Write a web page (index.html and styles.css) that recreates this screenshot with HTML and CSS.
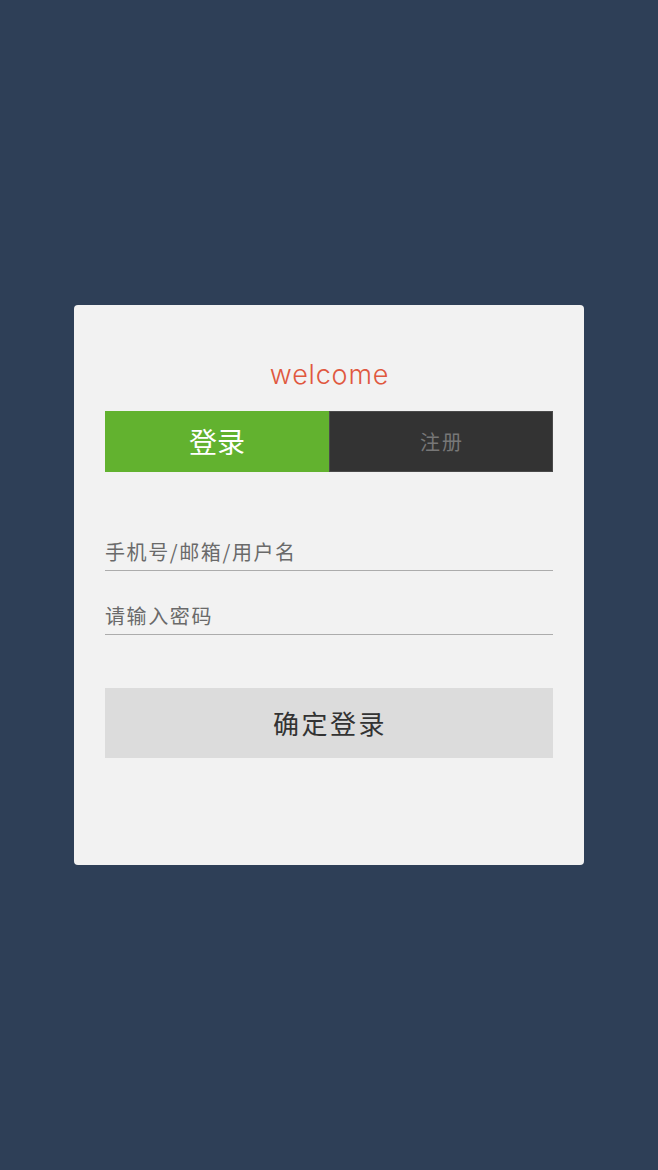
FILE: index.html
```html
<!DOCTYPE html>
<html lang="zh">
<head>
<meta charset="utf-8">
<title>登录</title>
<link rel="stylesheet" href="styles.css">
</head>
<body>
<main class="page">
  <section class="card">
    <h1 class="welcome">welcome</h1>
    <div class="tabs">
      <div class="tab tab-active">登录</div>
      <div class="tab tab-inactive">注册</div>
    </div>
    <div class="field field-user"><span class="placeholder">手机号/邮箱/用户名</span></div>
    <div class="field field-pass"><span class="placeholder">请输入密码</span></div>
    <button class="submit">确定登录</button>
  </section>
</main>
</body>
</html>
```
FILE: styles.css
```css
html, body {
  margin: 0;
  padding: 0;
}
body {
  background: #2e3f57;
  font-family: "Noto Sans CJK SC", "Liberation Sans", sans-serif;
  width: 658px;
  height: 1170px;
}
.page {
  display: flex;
  justify-content: center;
  padding-top: 305px;
}
.card {
  box-sizing: border-box;
  width: 510px;
  height: 560px;
  background: #f2f2f2;
  border-radius: 4px;
  padding: 0 31px;
  display: flex;
  flex-direction: column;
}
.welcome {
  margin: 54px 0 0;
  height: 52px;
  text-align: center;
  font-family: "Inter", "Liberation Sans", sans-serif;
  font-weight: 300;
  font-size: 27px;
  line-height: 32px;
  color: #e0583f;
  letter-spacing: 0.8px;
  padding-left: 1px;
}
.tabs {
  display: flex;
  height: 61px;
}
.tab {
  display: flex;
  align-items: center;
  justify-content: center;
  box-sizing: border-box;
}
.tab-active {
  width: 224px;
  background: #62b22f;
  color: #ffffff;
  font-size: 28px;
  padding-bottom: 2px;
}
.tab-inactive {
  width: 224px;
  background: #333333;
  border: 1px solid #4a4a4a;
  color: #777777;
  font-size: 20px;
  letter-spacing: 2px;
  padding-left: 2px;
}
.field {
  height: 38px;
  border-bottom: 1px solid #acacac;
  display: flex;
  align-items: flex-end;
  padding-bottom: 5px;
  box-sizing: border-box;
}
.field-user {
  margin-top: 61px;
}
.field-pass {
  margin-top: 26px;
}
.placeholder {
  font-size: 20px;
  line-height: 26px;
  color: #6a6a6a;
  letter-spacing: 1.6px;
}
.submit {
  margin-top: 53px;
  height: 70px;
  border: none;
  background: #dcdcdc;
  color: #333333;
  font-family: "Noto Sans CJK SC", "Liberation Sans", sans-serif;
  font-size: 26px;
  letter-spacing: 2.5px;
  padding: 0 0 2px 2px;
}
```
